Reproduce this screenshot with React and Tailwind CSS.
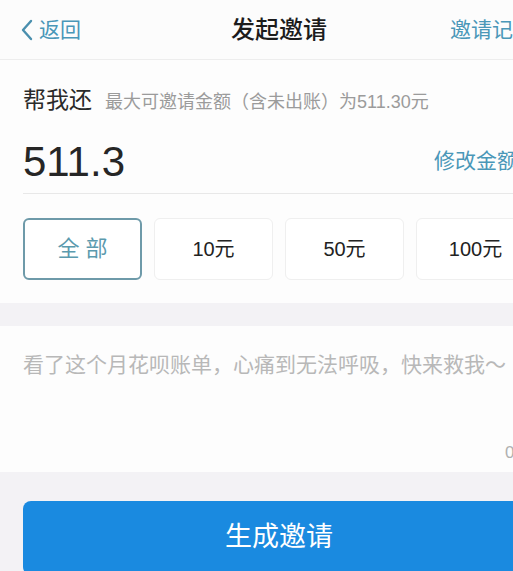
import React, { useState } from "react";

const amounts = ["全 部", "10元", "50元", "100元"];

const App = () => {
  const [selected, setSelected] = useState(0);

  return (
    <div className="w-[513px] h-[571px] overflow-hidden bg-[#f3f2f5] font-['Liberation_Sans','Noto_Sans_CJK_SC',sans-serif]">
      <div className="w-[558px]">
        {/* Nav bar */}
        <div className="h-[60px] bg-[#fcfcfc] border-b border-[#ededed] flex items-center justify-between px-[20px]">
          <div className="flex items-center w-[110px] text-[#4a97b8]">
            <svg width="13" height="22" viewBox="0 0 13 22" fill="none" className="mr-[6px]">
              <path d="M11 2 L3 11 L11 20" stroke="#4a8fae" strokeWidth="2.4" strokeLinecap="round" strokeLinejoin="round" />
            </svg>
            <span className="text-[21px] leading-none">返回</span>
          </div>
          <h1 className="text-[24px] font-medium text-[#1c1c1c] leading-none">发起邀请</h1>
          <div className="w-[110px] text-right text-[21px] text-[#4a97b8] leading-none pr-[4px]">邀请记录</div>
        </div>

        {/* Amount section */}
        <div className="bg-[#fdfdfd] px-[23px] pt-[23px] pb-[23px]">
          <div className="flex items-baseline">
            <span className="text-[23px] text-[#2a2a2a]">帮我还</span>
            <span className="ml-[13px] text-[18px] text-[#9b9b9b]">最大可邀请金额（含未出账）为511.30元</span>
          </div>
          <div className="flex items-center justify-between h-[64px] mt-[12px] border-b border-[#e8e8e8]">
            <span className="text-[42px] text-[#262626] leading-none pt-[2px]">511.3</span>
            <span className="text-[21px] text-[#4a97b8] mr-[17px]">修改金额</span>
          </div>
          <div className="grid grid-cols-4 gap-[12px] mt-[24px]">
            {amounts.map((a, i) => (
              <button
                key={a}
                onClick={() => setSelected(i)}
                className={
                  i === selected
                    ? "h-[62px] rounded-[6px] border-2 border-[#6e9aa9] bg-white text-[22px] text-[#5b9aae]"
                    : "h-[62px] rounded-[6px] border border-[#efefef] bg-white text-[20px] text-[#222]"
                }
              >
                {a}
              </button>
            ))}
          </div>
        </div>

        {/* Message */}
        <div className="mt-[23px] bg-[#fdfdfd] h-[146px] px-[23px] pt-[28px] flex flex-col">
          <p className="text-[21px] text-[#b8b8b8] leading-none">看了这个月花呗账单，心痛到无法呼吸，快来救我～</p>
          <div className="mt-auto mb-[6px] text-right text-[17px] text-[#b0b0b0] -mr-[3px]">0/50</div>
        </div>

        {/* Submit */}
        <div className="px-[23px] pt-[29px]">
          <button className="w-full h-[74px] rounded-[8px] bg-[#1a8ae0] text-white text-[27px]">生成邀请</button>
        </div>
      </div>
    </div>
  );
};

export default App;
